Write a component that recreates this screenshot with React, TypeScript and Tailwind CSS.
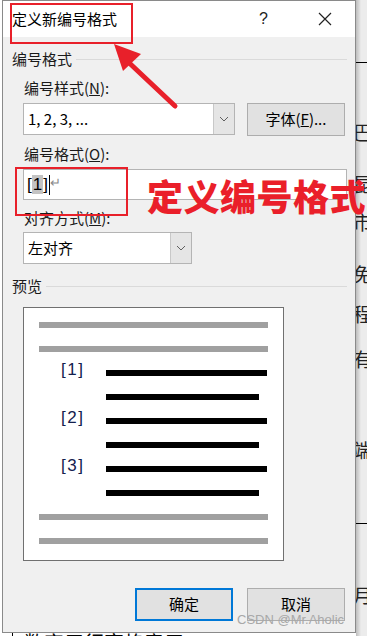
import React from 'react';

const FONT = { fontFamily: '"Noto Sans CJK SC", "Liberation Sans", sans-serif' };

const Chevron = () => (
  <svg width="10" height="6" viewBox="0 0 10 6" fill="none">
    <path d="M1 1l4 4 4-4" stroke="#606060" strokeWidth="1" />
  </svg>
);

const GroupHeader: React.FC<{ label: string }> = ({ label }) => (
  <div className="flex items-center h-[20px] pl-[9px] pr-[8px] gap-[4px]">
    <span className="text-[15px] leading-[20px] text-[#1a1a1a]">{label}</span>
    <div className="flex-1 h-px bg-[#dadada]" />
  </div>
);

const Label: React.FC<{ text: string; hot: string; rest: string }> = ({ text, hot, rest }) => (
  <div className="h-[20px] pl-[21px] text-[15px] leading-[20px] text-[#1a1a1a]">
    {text}(<span className="underline">{hot}</span>){rest}
  </div>
);

const PreviewLine: React.FC<{ kind: 'gray' | 'long' | 'short'; num?: string }> = ({ kind, num }) => {
  if (kind === 'gray') {
    return <div className="h-[6px] mx-[15px] bg-[#a0a0a0]" />;
  }
  return (
    <div className="relative h-[6px]">
      {num && (
        <span
          className="absolute left-[37px] top-[-11px] text-[17px] leading-[22px] tracking-[1.5px] text-[#14204e]"
          style={{ fontFamily: '"Liberation Sans", sans-serif' }}
        >
          {num}
        </span>
      )}
      <div className={`h-[6px] ml-[82px] bg-black ${kind === 'long' ? 'w-[161px]' : 'w-[153px]'}`} />
    </div>
  );
};

const sideChars = [
  { ch: '巴', top: 120 },
  { ch: '昆', top: 172 },
  { ch: '市', top: 210 },
  { ch: '免', top: 262 },
  { ch: '程', top: 302 },
  { ch: '有', top: 347 },
  { ch: '端', top: 438 },
  { ch: '月', top: 583 },
];

export default function App() {
  return (
    <div className="relative w-[367px] h-[636px] overflow-hidden bg-white" style={FONT}>
      {/* document behind the dialog */}
      <div className="absolute left-[356px] top-0 w-[11px] h-[636px] bg-[#ececec]">
        <div className="absolute left-0 top-0 w-[5px] h-full bg-gradient-to-r from-[#bdbdbd] to-[#ececec]" />
        <div className="absolute left-0 top-[62px] w-full h-px bg-black" />
        <div className="absolute left-0 top-[523px] w-full h-px bg-black" />
      </div>
      {sideChars.map((c) => (
        <span
          key={c.ch}
          className="absolute left-[353px] text-[19px] leading-[24px] text-[#222]"
          style={{ top: c.top }}
        >
          {c.ch}
        </span>
      ))}
      <div className="absolute left-[24px] top-[631px] text-[20px] leading-[24px] text-black whitespace-nowrap">
        数字用行宽格意用 ↵
      </div>
      <div className="absolute left-[12px] top-[630px] w-px h-[8px] bg-black" />

      {/* dialog */}
      <div className="relative ml-[2px] w-[354px] h-[633px] border border-[#8a8a8a] bg-[#f0f0f0] flex flex-col">
        <div className="h-[36px] bg-white flex items-center">
          <span className="pl-[9px] text-[15px] leading-[20px] text-black">定义新编号格式</span>
          <span className="ml-auto text-[16px] leading-[20px] text-[#222]" style={{ fontFamily: '"Liberation Sans", sans-serif' }}>
            ?
          </span>
          <svg className="ml-[50px] mr-[23px]" width="14" height="14" viewBox="0 0 14 14">
            <path d="M1 1l12 12M13 1L1 13" stroke="#222" strokeWidth="1.2" />
          </svg>
        </div>

        <div className="mt-[12px]">
          <GroupHeader label="编号格式" />
        </div>
        <div className="mt-[9px]">
          <Label text="编号样式" hot="N" rest=":" />
        </div>
        <div className="mt-[5px] flex pl-[20px] pr-[10px]">
          <div className="w-[212px] h-[32px] flex border border-[#b4b4b4] bg-white">
            <span className="flex-1 pl-[4px] text-[15px] leading-[30px] text-black">1, 2, 3, ...</span>
            <div className="w-[21px] h-full bg-[#e5e5e5] border-l border-[#c8c8c8] flex items-center justify-center">
              <Chevron />
            </div>
          </div>
          <button className="ml-auto w-[98px] h-[33px] bg-[#e1e1e1] border border-[#adadad] text-[15px] text-black">
            字体(<span className="underline">F</span>)...
          </button>
        </div>

        <div className="mt-[8px]">
          <Label text="编号格式" hot="O" rest=":" />
        </div>
        <div className="mt-[5px] pl-[20px] pr-[8px]">
          <div className="h-[31px] border border-[#b4b4b4] bg-white flex items-center pl-[3px]">
            <span className="text-[17px] leading-[22px] text-black" style={{ fontFamily: '"Liberation Sans", sans-serif' }}>
              [<span className="bg-[#c3c3c3] px-[1px]">1</span>]
            </span>
            <span className="w-px h-[20px] bg-black ml-[1px]" />
            <span className="text-[13px] leading-[14px] text-[#8a8a8a] -mt-[6px]">↵</span>
          </div>
        </div>

        <div className="mt-[8px]">
          <Label text="对齐方式" hot="M" rest=":" />
        </div>
        <div className="mt-[4px] pl-[20px]">
          <div className="w-[169px] h-[32px] flex border border-[#b4b4b4] bg-white">
            <span className="flex-1 pl-[4px] text-[15px] leading-[30px] text-black">左对齐</span>
            <div className="w-[21px] h-full bg-[#e5e5e5] border-l border-[#c8c8c8] flex items-center justify-center">
              <Chevron />
            </div>
          </div>
        </div>

        <div className="mt-[12px]">
          <GroupHeader label="预览" />
        </div>
        <div className="mt-[11px] pl-[20px]">
          <div className="w-[261px] h-[254px] border border-[#707070] bg-white pt-[14px] flex flex-col gap-[18px]">
            <PreviewLine kind="gray" />
            <PreviewLine kind="gray" />
            <PreviewLine kind="long" num="[1]" />
            <PreviewLine kind="short" />
            <PreviewLine kind="long" num="[2]" />
            <PreviewLine kind="short" />
            <PreviewLine kind="long" num="[3]" />
            <PreviewLine kind="short" />
            <PreviewLine kind="gray" />
            <PreviewLine kind="gray" />
          </div>
        </div>

        <div className="mt-[27px] flex justify-end gap-[14px] pr-[10px]">
          <button className="w-[98px] h-[33px] bg-[#e1e1e1] border-2 border-[#0078d7] text-[15px] text-black">确定</button>
          <button className="w-[98px] h-[33px] bg-[#e1e1e1] border border-[#adadad] text-[15px] text-black">取消</button>
        </div>
      </div>

      {/* annotations */}
      <div className="absolute left-[10px] top-[3px] w-[123px] h-[41px] border-2 border-[#e8202a]" />
      <div className="absolute left-[15px] top-[167px] w-[113px] h-[49px] border-2 border-[#e8202a]" />
      <div className="absolute left-[147px] top-[172px] text-[36px] leading-[46px] font-black tracking-[0.5px] text-[#ea1f2a] whitespace-nowrap">
        定义编号格式
      </div>
      <svg className="absolute left-0 top-0" width="367" height="636" viewBox="0 0 367 636">
        <path d="M175 106L124 58" stroke="#e8202a" strokeWidth="5" strokeLinecap="round" />
        <path d="M114 44L141 54L123 71Z" fill="#e8202a" />
      </svg>
      <div
        className="absolute left-[237px] top-[611px] text-[13px] leading-[18px] text-[#a8a8a8] whitespace-nowrap"
        style={{ fontFamily: '"Liberation Sans", sans-serif' }}
      >
        CSDN @Mr.Aholic
      </div>
    </div>
  );
}
